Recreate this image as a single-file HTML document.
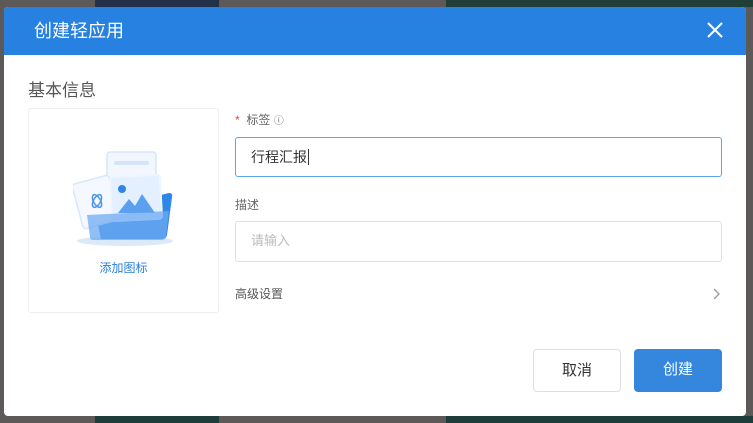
<!DOCTYPE html>
<html><head><meta charset="utf-8"><style>
*{margin:0;padding:0;box-sizing:border-box}
body{width:753px;height:423px;position:relative;overflow:hidden;background:#5d5958;font-family:"Liberation Sans","Noto Sans CJK SC",sans-serif}
.bg{position:absolute}
.dlg{position:absolute;left:4px;top:7px;width:742px;height:409px;background:#fff;border-radius:4px;overflow:hidden}
.hd{height:48px;background:#2681e0;color:#fff;font-size:18px;line-height:48px;padding-left:30px}
.x{position:absolute;right:22px;top:14px}
.t{position:absolute;left:24px;top:69px;font-size:17px;color:#555}
.card{position:absolute;left:24px;top:101px;width:191px;height:205px;border:1px solid #eceef1;border-radius:3px}
.add{position:absolute;left:0;right:0;top:150px;text-align:center;color:#2a7fd8;font-size:12px}
.lbl{position:absolute;font-size:12px;color:#666}
.inp{position:absolute;left:231px;width:487px;border:1px solid #dcdfe6;border-radius:3px;font-size:14px;padding-left:15px}
.btn{position:absolute;top:342px;width:88px;height:43px;border-radius:4px;font-size:15px;text-align:center;line-height:41px}
</style></head><body>
<div class="bg" style="left:95px;top:0;width:124px;height:7px;background:#22304a"></div>
<div class="bg" style="left:446px;top:0;width:307px;height:7px;background:#1f3f37"></div>
<div class="bg" style="left:95px;top:416px;width:124px;height:7px;background:#1e3d3a"></div>
<div class="bg" style="left:446px;top:416px;width:307px;height:7px;background:#1e3d3a"></div>
<div class="dlg">
<div class="hd">创建轻应用</div>
<svg class="x" width="18" height="18" viewBox="0 0 18 18"><path d="M2 2L16 16M16 2L2 16" stroke="#fff" stroke-width="2"/></svg>
<div class="t">基本信息</div>
<div class="card">
<svg style="position:absolute;left:44px;top:40px" width="104" height="100" viewBox="0 0 104 100">
<ellipse cx="52" cy="92" rx="48" ry="5" fill="#dbe9fb"/>
<rect x="34" y="3" width="49" height="58" rx="3" fill="#f2f7ff" stroke="#d6e6fb" stroke-width="1.5"/>
<rect x="41" y="12" width="35" height="4" rx="2" fill="#d4e4fa"/>
<path d="M22 62 L96 44 Q100 44 99 48 L94 86 Q93 90 89 90 L28 90Z" fill="#2d86e8"/>
<rect x="4" y="30" width="38" height="46" rx="3" fill="#f5f9ff" stroke="#d6e6fb" stroke-width="1.5" transform="rotate(-15 23 53)"/>
<g fill="none" stroke="#4d95ec" stroke-width="1.5"><ellipse cx="24" cy="52" rx="7" ry="3.5" transform="rotate(60 24 52)"/><ellipse cx="24" cy="52" rx="7" ry="3.5" transform="rotate(-60 24 52)"/></g>
<rect x="38" y="27" width="50" height="44" rx="3" fill="#e4efff" stroke="#eef5ff" stroke-width="2" transform="rotate(-3 63 49)"/>
<circle cx="49" cy="40" r="4" fill="#2d86e8"/>
<path d="M45 64 L56 50 L62 57 L69 45 L82 64Z" fill="#5a9ff0"/>
<path d="M14 66 L96 62 L93 88 Q92 91 88 91 L20 91 Q17 91 17 88Z" fill="#6eaaf2" opacity=".75"/>
</svg>
<div class="add">添加图标</div>
</div>
<div class="lbl" style="left:231px;top:104px"><span style="color:#e44">*</span>&nbsp; 标签 <span style="font-size:10px">ⓘ</span></div>
<div class="inp" style="top:130px;height:40px;line-height:38px;border-color:#5aa6f0;color:#333">行程汇报<span style="border-left:1px solid #333;margin-left:1px"></span></div>
<div class="lbl" style="left:231px;top:189px">描述</div>
<div class="inp" style="top:214px;height:41px;line-height:38px;color:#bbb;font-size:13px">请输入</div>
<div class="lbl" style="left:231px;top:278px;color:#555">高级设置</div>
<svg style="position:absolute;left:708px;top:281px" width="8" height="12" viewBox="0 0 8 12"><path d="M2 1L7 6L2 11" stroke="#999" fill="none" stroke-width="1.3"/></svg>
<div class="btn" style="left:529px;border:1px solid #dcdfe6;color:#333">取消</div>
<div class="btn" style="left:630px;background:#3587de;color:#fff">创建</div>
</div>
</body></html>
